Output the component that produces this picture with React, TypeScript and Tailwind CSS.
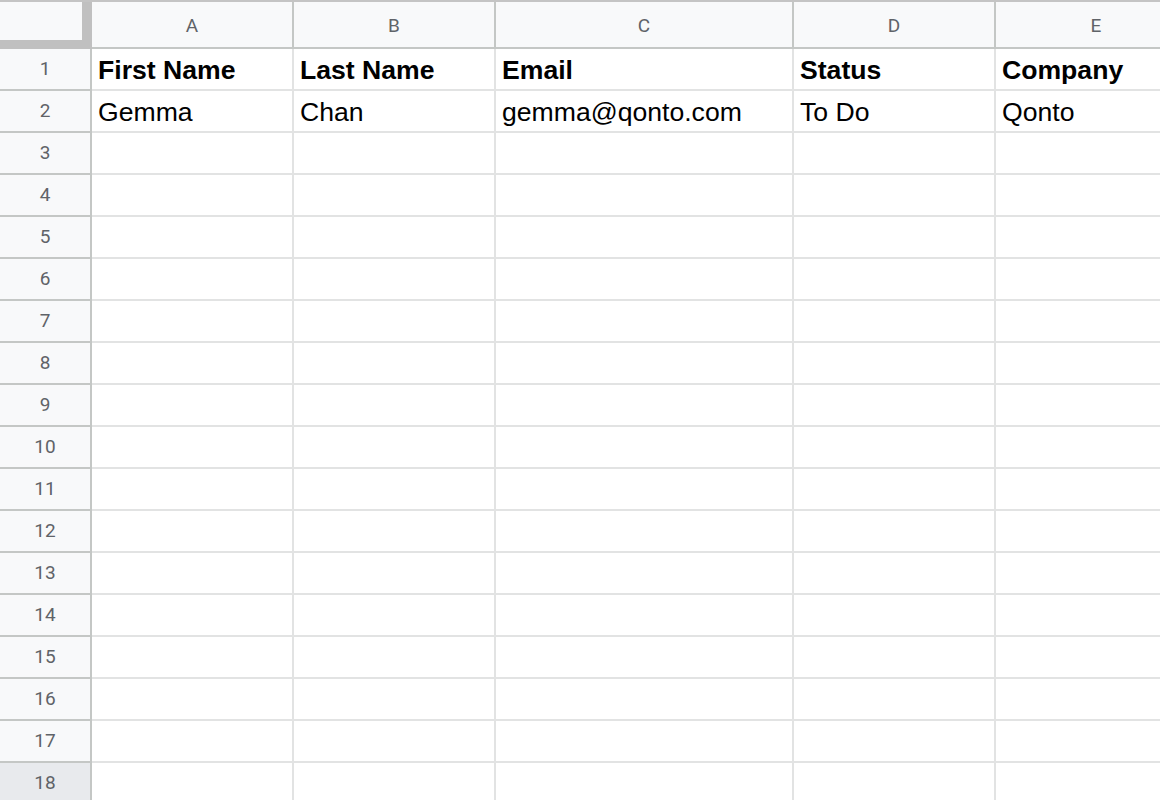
import React from "react";

const columns = [
  { key: "A", width: "w-[202px]" },
  { key: "B", width: "w-[202px]" },
  { key: "C", width: "w-[298px]" },
  { key: "D", width: "w-[202px]" },
  { key: "E", width: "w-[202px]" },
];

const data: Record<number, string[]> = {
  1: ["First Name", "Last Name", "Email", "Status", "Company"],
  2: ["Gemma", "Chan", "gemma@qonto.com", "To Do", "Qonto"],
};

const rows = Array.from({ length: 18 }, (_, i) => i + 1);

export default function App() {
  return (
    <div className="w-[1160px] h-[800px] overflow-hidden bg-white font-['Liberation_Sans',Arial,sans-serif]">
      {/* column headers */}
      <div className="flex h-[49px] border-t-2 border-[#c4c4c4]">
        <div className="w-[92px] shrink-0 bg-[#c0c0c0]">
          <div className="w-[82px] h-[38px] bg-[#f8f9fa]" />
        </div>
        {columns.map((col) => (
          <div
            key={col.key}
            className={`${col.width} shrink-0 h-full flex items-center justify-center pt-[4px] bg-[#f8f9fa] border-r-2 border-b-2 border-[#c4c7c5] text-[19px] text-[#5f6368] font-['Roboto',sans-serif]`}
          >
            {col.key}
          </div>
        ))}
      </div>

      {/* rows */}
      {rows.map((r) => (
        <div key={r} className="flex h-[42px]">
          <div
            className={`w-[92px] shrink-0 flex items-center justify-center border-r-2 border-b-2 border-[#c4c7c5] text-[19px] text-[#5f6368] font-['Roboto',sans-serif] ${
              r === 18 ? "bg-[#e8eaed]" : "bg-[#f8f9fa]"
            }`}
          >
            {r}
          </div>
          {columns.map((col, ci) => (
            <div
              key={col.key}
              className={`${col.width} shrink-0 flex items-end pb-[5px] pl-[6px] border-r-2 border-b-2 border-[#e2e3e3] text-[26.6px] leading-none text-black whitespace-nowrap overflow-hidden ${
                r === 1 ? "font-bold" : ""
              }`}
            >
              {data[r]?.[ci] ?? ""}
            </div>
          ))}
        </div>
      ))}
    </div>
  );
}
